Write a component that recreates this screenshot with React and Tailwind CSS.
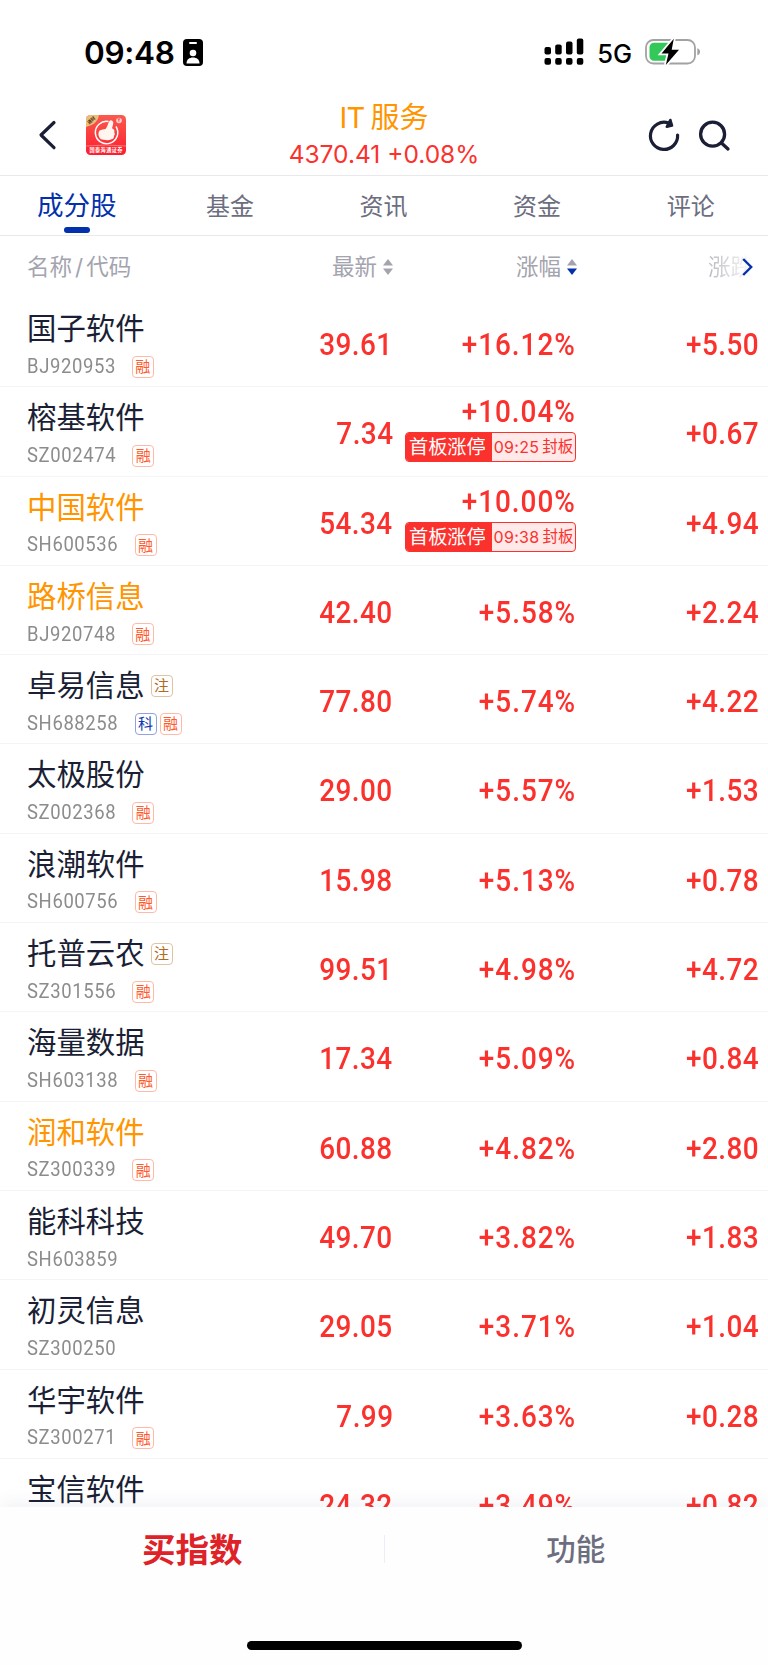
import React from "react";

const stocks = [
  { name: "国子软件", code: "BJ920953", tags: ["融"], price: "39.61", pct: "+16.12%", diff: "+5.50" },
  { name: "榕基软件", code: "SZ002474", tags: ["融"], price: "7.34", pct: "+10.04%", diff: "+0.67", limit: "09:25" },
  { name: "中国软件", code: "SH600536", tags: ["融"], price: "54.34", pct: "+10.00%", diff: "+4.94", limit: "09:38", held: true },
  { name: "路桥信息", code: "BJ920748", tags: ["融"], price: "42.40", pct: "+5.58%", diff: "+2.24", held: true },
  { name: "卓易信息", code: "SH688258", tags: ["科", "融"], price: "77.80", pct: "+5.74%", diff: "+4.22", note: true },
  { name: "太极股份", code: "SZ002368", tags: ["融"], price: "29.00", pct: "+5.57%", diff: "+1.53" },
  { name: "浪潮软件", code: "SH600756", tags: ["融"], price: "15.98", pct: "+5.13%", diff: "+0.78" },
  { name: "托普云农", code: "SZ301556", tags: ["融"], price: "99.51", pct: "+4.98%", diff: "+4.72", note: true },
  { name: "海量数据", code: "SH603138", tags: ["融"], price: "17.34", pct: "+5.09%", diff: "+0.84" },
  { name: "润和软件", code: "SZ300339", tags: ["融"], price: "60.88", pct: "+4.82%", diff: "+2.80", held: true },
  { name: "能科科技", code: "SH603859", tags: [], price: "49.70", pct: "+3.82%", diff: "+1.83" },
  { name: "初灵信息", code: "SZ300250", tags: [], price: "29.05", pct: "+3.71%", diff: "+1.04" },
  { name: "华宇软件", code: "SZ300271", tags: ["融"], price: "7.99", pct: "+3.63%", diff: "+0.28" },
  { name: "宝信软件", tags: [], price: "24.32", pct: "+3.49%", diff: "+0.82" },
];

const tabs = ["成分股", "基金", "资讯", "资金", "评论"];

const tagColors = {
  融: "border-[#ffb9a6] text-[#ff5a2c]",
  科: "border-[#8fa3dc] text-[#0a37b0]",
  注: "border-[#dfc3a3] text-[#b06a1c]",
};

function StatusBar() {
  return (
    <div className="flex h-[96px] items-start pl-[84px] pr-[67px] pt-[33px]">
      <span className="h-[40px] text-[31.5px] font-semibold leading-[40px] tracking-[-0.3px] text-black">09:48</span>
      <svg className="ml-[8px] mt-[6px] h-[27px] w-[20px]" viewBox="0 0 20 27">
        <rect width="20" height="27" rx="4" fill="#000" />
        <rect x="6" y="3" width="8" height="2" rx="1" fill="#fff" />
        <circle cx="10" cy="14" r="3.3" fill="#fff" />
        <path d="M3.500 24.500c0-4 2.800-6 6.500-6s6.500 2 6.500 6z" fill="#fff" />
      </svg>
      <svg className="ml-auto mt-[5px] h-[27px] w-[40px]" viewBox="0 0 40 27">
        <rect x="0.500" y="9" width="6.500" height="7.500" rx="2" />
        <rect x="11.200" y="6.500" width="6.500" height="10" rx="2" />
        <rect x="22" y="3.500" width="6.500" height="13" rx="2" />
        <rect x="32.800" y="0.500" width="6.500" height="16" rx="2" />
        <rect x="0.500" y="20" width="6.500" height="6.800" rx="2" />
        <rect x="11.200" y="20" width="6.500" height="6.800" rx="2" />
        <rect x="22" y="20" width="6.500" height="6.800" rx="2" />
        <rect x="32.800" y="20" width="6.500" height="6.800" rx="2" />
      </svg>
      <span className="ml-[13px] mt-[1px] text-[25.5px] font-medium leading-[40px] text-black">5G</span>
      <svg className="ml-[13px] mt-[5px] h-[28px] w-[56px]" viewBox="0 0 56 28">
        <rect x="1" y="2" width="49" height="23.500" rx="7.500" fill="#fff" stroke="#a2a2a2" strokeWidth="1.800" />
        <path d="M9 4.800h17v18h-17a4.500 4.500 0 0 1-4.500-4.500v-9a4.500 4.500 0 0 1 4.500-4.500z" fill="#34c759" />
        <path d="M52.300 10.300c3.700 1 3.700 6 0 7z" fill="#a2a2a2" />
        <path d="M28.800.8 16.500 15.500h7L20.800 27 34 11.700h-7.300z" fill="#000" stroke="#fff" strokeWidth="3.600" paintOrder="stroke" />
      </svg>
    </div>
  );
}

function BrokerLogo() {
  return (
    <svg className="h-[40px] w-[40px]" viewBox="0 0 40 40">
      <defs>
        <linearGradient id="logoRed" x1="0" y1="0" x2="0" y2="1">
          <stop offset="0" stopColor="#fb5a50" />
          <stop offset="1" stopColor="#fd1d2c" />
        </linearGradient>
        <clipPath id="logoClip">
          <rect width="40" height="40" rx="4.500" />
        </clipPath>
      </defs>
      <g clipPath="url(#logoClip)">
        <rect width="40" height="40" fill="url(#logoRed)" />
        <path d="M0 0h13q-1 9-13 12z" fill="#e8c07a" />
        <text x="5.500" y="6.800" fontSize="4.500" fontWeight="700" fill="#5b3212" textAnchor="middle" transform="rotate(-40 5.500 5.500)">通财</text>
        <path d="M22.500 6.500a11.200 11.200 0 1 0 7.500 5" fill="none" stroke="#fff" strokeWidth="1.500" />
        <path d="M13.500 15.500c2-.8 4-1.200 6-1.500 2.400-2.500 2.700-8 5-8.800 2.500-.3 3.300 2 2.500 4.500l-1 3.500c2 .8 3 2.300 2.200 4 1 1.300.8 2.800-.2 3.500.3 2-.9 3.300-2.500 3.600-3 1.500-8 .7-11-.3-2.500-2.500-2.700-6-1-8.500z" fill="#fff6ef" />
        <circle cx="33" cy="5.500" r="2.800" fill="#fbd5cf" />
        <text x="33" y="7.200" fontSize="4.500" fontWeight="700" fill="#f0403c" textAnchor="middle">Y</text>
        <path d="M0 31q20-2 40 0" fill="none" stroke="#ffaaa5" strokeWidth="0.600" />
        <text x="20" y="37" fontSize="5.200" fontWeight="700" fill="#fff" textAnchor="middle" textLength="33">国泰海通证券</text>
      </g>
    </svg>
  );
}

function Header() {
  return (
    <header className="flex h-[80px] items-center border-b border-[#e9e9eb] px-[37px]">
      <div className="flex w-[200px] items-center">
        <svg className="mt-[-1px] h-[32px] w-[20px]" viewBox="0 0 20 32" fill="none" stroke="#1b1f36" strokeWidth="3.200" strokeLinecap="round" strokeLinejoin="round">
          <path d="M17 3.500 4 16l13 12.700" />
        </svg>
        <div className="ml-[29px] mt-[-1px]">
          <BrokerLogo />
        </div>
      </div>
      <div className="flex flex-1 flex-col items-center pb-[2px]">
        <h1 className="text-[29px] leading-[40px] text-[#ff9500]">
          <span className="text-[29px] tracking-[-0.8px]">IT</span>
          <span className="ml-[6px]">服务</span>
        </h1>
        <p className="mt-[-1px] whitespace-nowrap text-[24.5px] leading-[34px] text-[#fb312d]">4370.41 +0.08%</p>
      </div>
      <div className="flex w-[200px] items-center justify-end gap-[17px]">
        <svg className="h-[36px] w-[34px]" viewBox="0 0 34 36" fill="none" stroke="#1b1f36" strokeWidth="3.200" strokeLinecap="round" strokeLinejoin="round">
          <path d="M22.500 5A13.600 13.600 0 1 0 31.600 17" />
          <path d="M24.300 2 26 7.600 20.800 8.800z" fill="#1b1f36" strokeWidth="2.600" />
        </svg>
        <svg className="h-[36px] w-[34px]" viewBox="0 0 34 36" fill="none" stroke="#1b1f36" strokeWidth="3.300" strokeLinecap="round">
          <circle cx="15.600" cy="16.200" r="12" />
          <path d="M25 25.500 31 31" />
        </svg>
      </div>
    </header>
  );
}

function Tabs() {
  return (
    <nav className="grid h-[60px] grid-cols-5 border-b border-[#e9e9eb] text-[#6c6e80]">
      {tabs.map((tab, i) =>
        i === 0 ? (
          <div key={tab} className="flex flex-col items-center pt-[9px] text-[26.6px] leading-[40px] text-[#0330ac]">
            {tab}
            <span className="mt-[2px] h-[6px] w-[26px] rounded-full bg-[#0330ac]" />
          </div>
        ) : (
          <div key={tab} className="pr-[1px] pt-[11px] text-center text-[24px] leading-[40px]">
            {tab}
          </div>
        )
      )}
    </nav>
  );
}

function SortIcon({ down }) {
  return (
    <svg className="h-[16px] w-[10px]" viewBox="0 0 10 16">
      <path d="M5 0l5 6.500H0z" fill="#a3a4ae" />
      <path d="M5 16l5-6.500H0z" fill={down ? "#0330ac" : "#a3a4ae"} />
    </svg>
  );
}

function TableHead() {
  return (
    <div className="flex h-[62px] items-center pb-[1px] text-[22.5px] text-[#a3a4ae]">
      <div className="w-[220px] pl-[27px]">
        名称<span className="mx-[3px]">/</span>代码
      </div>
      <div className="flex w-[173px] items-center justify-end gap-[6px]">
        最新
        <SortIcon />
      </div>
      <div className="flex w-[184px] items-center justify-end gap-[6px]">
        涨幅
        <SortIcon down />
      </div>
      <div className="relative flex flex-1 justify-end pr-[15px]">
        <span className="bg-gradient-to-r from-[#b8b9c1] to-white bg-clip-text text-transparent">涨跌</span>
        <svg className="absolute right-[15px] top-[8px] h-[18px] w-[11px]" viewBox="0 0 11 18" fill="none" stroke="#0330ac" strokeWidth="2.400">
          <path d="M1.200 1l8 8-8 8" />
        </svg>
      </div>
    </div>
  );
}

function Tag({ label }) {
  return (
    <span className={`flex h-[22px] w-[22px] items-center justify-center rounded-[4px] border text-[15px] leading-none ${tagColors[label]}`}>
      {label}
    </span>
  );
}

// Narrow, loosely spaced figures, anchored to the right edge of their column
function Figure({ children, wide }) {
  return (
    <span className={`inline-block origin-right scale-x-90 ${wide ? "tracking-[1.1px]" : "tracking-[0.5px]"}`}>
      {children}
    </span>
  );
}

function LimitBadge({ time }) {
  return (
    <div className="flex h-[30px] w-[171px] overflow-hidden rounded-[4px] border border-[#fb312d] bg-[#ffe9e9]">
      <span className="w-[86px] whitespace-nowrap bg-[#fb312d] pl-[3px] text-[19.2px] leading-[29px] text-white">首板涨停</span>
      <span className="flex flex-1 items-center justify-center gap-[3px] whitespace-nowrap text-[15.5px] leading-[28px] text-[#fb312d]">
        <span className="text-[16px] tracking-[0.3px]">{time}</span>
        <span>封板</span>
      </span>
    </div>
  );
}

function StockRow({ stock }) {
  return (
    <div className="flex h-[89.3px] shrink-0 border-b border-[#f5f5f7]">
      <div className="w-[220px] pl-[27px] pt-[11px]">
        <div className="flex h-[40px] items-center">
          <span className={`text-[29.4px] leading-[40px] ${stock.held ? "text-[#ff9500]" : "text-[#1b1f36]"}`}>{stock.name}</span>
          {stock.note && (
            <span className="ml-[6px] mt-[-1px]">
              <Tag label="注" />
            </span>
          )}
        </div>
        {stock.code && (
          <div className="mt-[5px] flex h-[24px] items-center">
            <span className="mr-[6px] origin-left scale-x-90 font-['Roboto'] text-[20.500px] tracking-[0.7px] text-[#8c8c8c]">{stock.code}</span>
            <span className="mt-[1px] flex gap-[3px]">
              {stock.tags.map((tag) => (
                <Tag key={tag} label={tag} />
              ))}
            </span>
          </div>
        )}
      </div>
      <div className="flex flex-1 font-['Roboto'] text-[31px] font-medium leading-[40px] text-[#fb312d]">
        <div className="w-[173px] pt-[27px] text-right">
          <Figure>{stock.price}</Figure>
        </div>
        {stock.limit ? (
          <div className="flex w-[183px] flex-col items-end pt-[5px]">
            <Figure wide>{stock.pct}</Figure>
            <div className="font-['Inter','Noto_Sans_CJK_SC',sans-serif] font-normal">
              <LimitBadge time={stock.limit} />
            </div>
          </div>
        ) : (
          <div className="w-[183px] pt-[27px] text-right">
            <Figure wide>{stock.pct}</Figure>
          </div>
        )}
        <div className="w-[183px] pt-[27px] text-right">
          <Figure>{stock.diff}</Figure>
        </div>
      </div>
    </div>
  );
}

function BottomBar() {
  return (
    <footer className="relative h-[158px] bg-[#fefefe] shadow-[0_-4px_16px_rgba(60,70,130,0.07)]">
      <div className="flex h-[84px] items-center">
        <div className="flex-1 pl-[1px] pt-[2px] text-center text-[33.5px] font-bold text-[#de2228]">买指数</div>
        <div className="h-[28px] w-px bg-[#ededf5]" />
        <div className="flex-1 pr-[1px] text-center text-[29.500px] font-medium text-[#6c6e80]">功能</div>
      </div>
      <div className="mx-auto mt-[50px] h-[9px] w-[275px] rounded-full bg-black" />
    </footer>
  );
}

export default function App() {
  return (
    <div className="flex h-[1665px] w-[768px] flex-col overflow-hidden bg-white font-['Inter','Noto_Sans_CJK_SC',sans-serif]">
      <StatusBar />
      <Header />
      <Tabs />
      <TableHead />
      <main className="flex min-h-0 flex-1 flex-col overflow-hidden">
        {stocks.map((stock) => (
          <StockRow key={stock.name} stock={stock} />
        ))}
      </main>
      <BottomBar />
    </div>
  );
}
